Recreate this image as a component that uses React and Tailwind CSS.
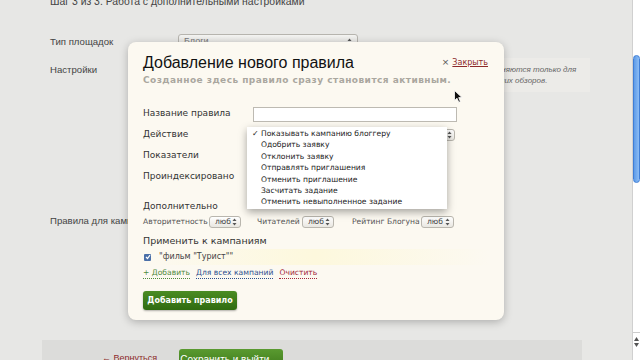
import React from 'react';

const ui = { fontFamily: '"DejaVu Sans", "Noto Sans", sans-serif' };
const page = { fontFamily: '"Liberation Sans", Arial, sans-serif' };

// tiny up/down arrows used in the mac-style selects
const Arrows = () => (
  <svg width="5" height="8" viewBox="0 0 5 8" className="shrink-0">
    <path d="M2.5 0.5 L4.5 3 L0.5 3 Z" fill="#555" />
    <path d="M2.5 7.5 L4.5 5 L0.5 5 Z" fill="#555" />
  </svg>
);

const MiniSelect = ({ width = 'w-[32px]' }) => (
  <div className={`${width} h-[12px] rounded-[3px] border border-[#b9b6ae] bg-gradient-to-b from-white to-[#e9e7e1] flex items-center justify-between pl-[5px] pr-[3px] text-[7.6px] text-[#444]`}>
    <span>люб</span>
    <Arrows />
  </div>
);

const actions = [
  'Показывать кампанию блоггеру',
  'Одобрить заявку',
  'Отклонить заявку',
  'Отправлять приглашения',
  'Отменить приглашение',
  'Засчитать задание',
  'Отменить невыполненное задание',
];

const Cursor = () => (
  <svg width="9" height="13" viewBox="0 0 9 13" className="absolute left-[454px] top-[90px]">
    <path d="M0.5 0.5 L0.5 10.5 L3 8.2 L4.8 12.3 L6.4 11.6 L4.7 7.6 L8 7.6 Z" fill="#111" stroke="#fff" strokeWidth="0.8" />
  </svg>
);

const RuleModal = () => (
  <div
    className="absolute left-[128px] top-[42px] w-[376px] h-[278px] rounded-[8px] bg-[#fcf9f1] shadow-[0_2px_8px_rgba(0,0,0,0.25)] pl-[15px] pr-[16px] pt-[11px]"
    style={ui}
  >
    <div className="flex items-start justify-between">
      <h1 className="text-[16px] leading-[20px] text-[#111]" style={page}>Добавление нового правила</h1>
      <a className="mt-[3px] text-[8px] text-[#8c2a2a] flex items-center gap-[3px]">
        <span className="text-[#555] text-[9px]">×</span>
        <span className="underline">Закрыть</span>
      </a>
    </div>
    <p className="text-[9px] leading-[13px] font-semibold tracking-[0.45px] text-[#aaa79f] mt-[1px] whitespace-nowrap">
      Созданное здесь правило сразу становится активным.
    </p>

    <div className="mt-[19px] text-[9px] text-[#333]">
      <div className="flex items-center h-[16px]">
        <span className="w-[110px]">Название правила</span>
        <div className="w-[204px] h-[15px] border border-[#bdbab2] bg-white" />
      </div>
      <div className="flex items-center h-[16px] mt-[5px]">
        <span className="w-[110px]">Действие</span>
        <div className="w-[202px] h-[12px] rounded-[3px] border border-[#b9b6ae] bg-gradient-to-b from-white to-[#e9e7e1] flex items-center justify-end pr-[2px]">
          <Arrows />
        </div>
      </div>
      <div className="flex items-center h-[16px] mt-[5px]">
        <span className="w-[110px]">Показатели</span>
      </div>
      <div className="flex items-center h-[16px] mt-[5px]">
        <span className="w-[110px]">Проиндексировано</span>
      </div>
      <div className="h-[16px] mt-[14px] flex items-center">Дополнительно</div>

      <div className="flex items-center h-[14px] text-[7.6px] text-[#555]">
        <span className="w-[66px]">Авторитетность</span>
        <MiniSelect />
        <span className="ml-[16px] w-[45px]">Читателей</span>
        <MiniSelect />
        <span className="ml-[18px] w-[69px]">Рейтинг Блогуна</span>
        <MiniSelect width="w-[33px]" />
      </div>

      <div className="h-[16px] mt-[4px] flex items-center text-[9.5px]">Применить к кампаниям</div>
      <div className="-ml-[3px] mr-[-2px] h-[16px] bg-gradient-to-r from-[#fcf9f1] via-[#fdf8dd] to-[#fcf9f1] flex items-center pl-[4px] text-[8px] text-[#444]">
        <span className="w-[7px] h-[7px] rounded-[1px] bg-[#4a6fa8] flex items-center justify-center">
          <svg width="6" height="6" viewBox="0 0 6 6"><path d="M1 3 L2.5 4.5 L5 1.2" stroke="#fff" strokeWidth="1.2" fill="none" /></svg>
        </span>
        <span className="ml-[8px]">"фильм "Турист""</span>
      </div>
      <div className="flex items-center h-[14px] mt-[1px] text-[7.6px] gap-[6px]">
        <span className="text-[#4f8a3c] border-b border-dotted border-[#4f8a3c] leading-[10px]">+ Добавить</span>
        <span className="text-[#2d4f8e] border-b border-dotted border-[#2d4f8e] leading-[10px]">Для всех кампаний</span>
        <span className="text-[#a3283a] border-b border-dotted border-[#a3283a] leading-[10px]">Очистить</span>
      </div>

      <button className="mt-[11px] w-[94px] h-[19px] rounded-[3px] bg-gradient-to-b from-[#4b8c23] to-[#2f6b10] shadow-[0_1px_2px_rgba(0,0,0,0.3)] text-white text-[8px] font-bold">
        Добавить правило
      </button>
    </div>

    {/* open dropdown of the action select */}
    <div className="absolute left-[119px] top-[85px] w-[200px] bg-white shadow-[0_3px_8px_rgba(0,0,0,0.35)] py-[1px] text-[7.6px] text-[#222]">
      {actions.map((a, i) => (
        <div key={a} className="h-[11.4px] flex items-center">
          <span className="w-[14px] pl-[5px] text-[8px]">{i === 0 ? '✓' : ''}</span>
          <span>{a}</span>
        </div>
      ))}
    </div>
  </div>
);

export default function App() {
  return (
    <div className="relative w-[640px] h-[360px] overflow-hidden bg-[#e7e7e5] flex" style={page}>
      <div className="flex-1 relative">
        <div className="-mt-[5px] pl-[50px] text-[10.4px] leading-[14px] text-[#444]">
          Шаг 3 из 3. Работа с дополнительными настройками
        </div>

        <div className="mt-[25px] pl-[50px] flex items-start text-[9.6px] text-[#444]">
          <span className="w-[128px] leading-[14px] mt-[1px]">Тип площадок</span>
          <div className="w-[180px] h-[16px] rounded-[3px] border border-[#b6b4ae] bg-gradient-to-b from-[#f4f4f2] to-[#d8d7d3] flex items-center justify-between px-[5px] text-[9px] text-[#777]">
            <span>Блоги</span>
            <Arrows />
          </div>
        </div>

        <div className="mt-[13px] pl-[50px] flex items-start text-[9.6px] text-[#444]">
          <span className="w-[330px]">Настройки</span>
          <div className="-mt-[5px] w-[210px] h-[34px] bg-[#ecebe8] pl-[8px] pt-[6px] text-[8px] leading-[11px] italic text-[#666] whitespace-nowrap">
            Показатели и рейтинг применяются только для<br />
            новых блогов и самых последних обзоров.
          </div>
        </div>

        <div className="mt-[122px] pl-[50px] text-[9.6px] text-[#444]">Правила для кампаний</div>

        <div className="absolute left-[42px] top-[340px] w-[540px] h-[30px] bg-[#dcdcda] flex items-start pl-[60px] pt-[9px] text-[9px]">
          <span className="mt-[3px] text-[#8c2a2a] underline">← Вернуться</span>
          <span className="ml-[22px] w-[104px] h-[20px] rounded-[3px] bg-gradient-to-b from-[#5a9a30] to-[#3d7a1a] text-white text-[10px] flex items-center justify-center">
            Сохранить и выйти →
          </span>
        </div>

        <RuleModal />
        <Cursor />
      </div>

      {/* scrollbar */}
      <div className="w-[8px] h-full bg-white border-l border-[#d0d0d0] flex flex-col">
        <div className="h-[55px]" />
        <div className="h-[128px] rounded-[4px] bg-gradient-to-r from-[#5d9be8] to-[#8bbcf5] border border-[#3f7ed6]" />
        <div className="flex-1" />
        <div className="h-[18px] flex flex-col items-center justify-center gap-[2px] border-t border-[#ccc]">
          <svg width="5" height="4" viewBox="0 0 5 4"><path d="M2.5 0 L5 4 L0 4 Z" fill="#555" /></svg>
          <svg width="5" height="4" viewBox="0 0 5 4"><path d="M2.5 4 L5 0 L0 0 Z" fill="#555" /></svg>
        </div>
        <div className="h-[10px]" />
      </div>
    </div>
  );
}
